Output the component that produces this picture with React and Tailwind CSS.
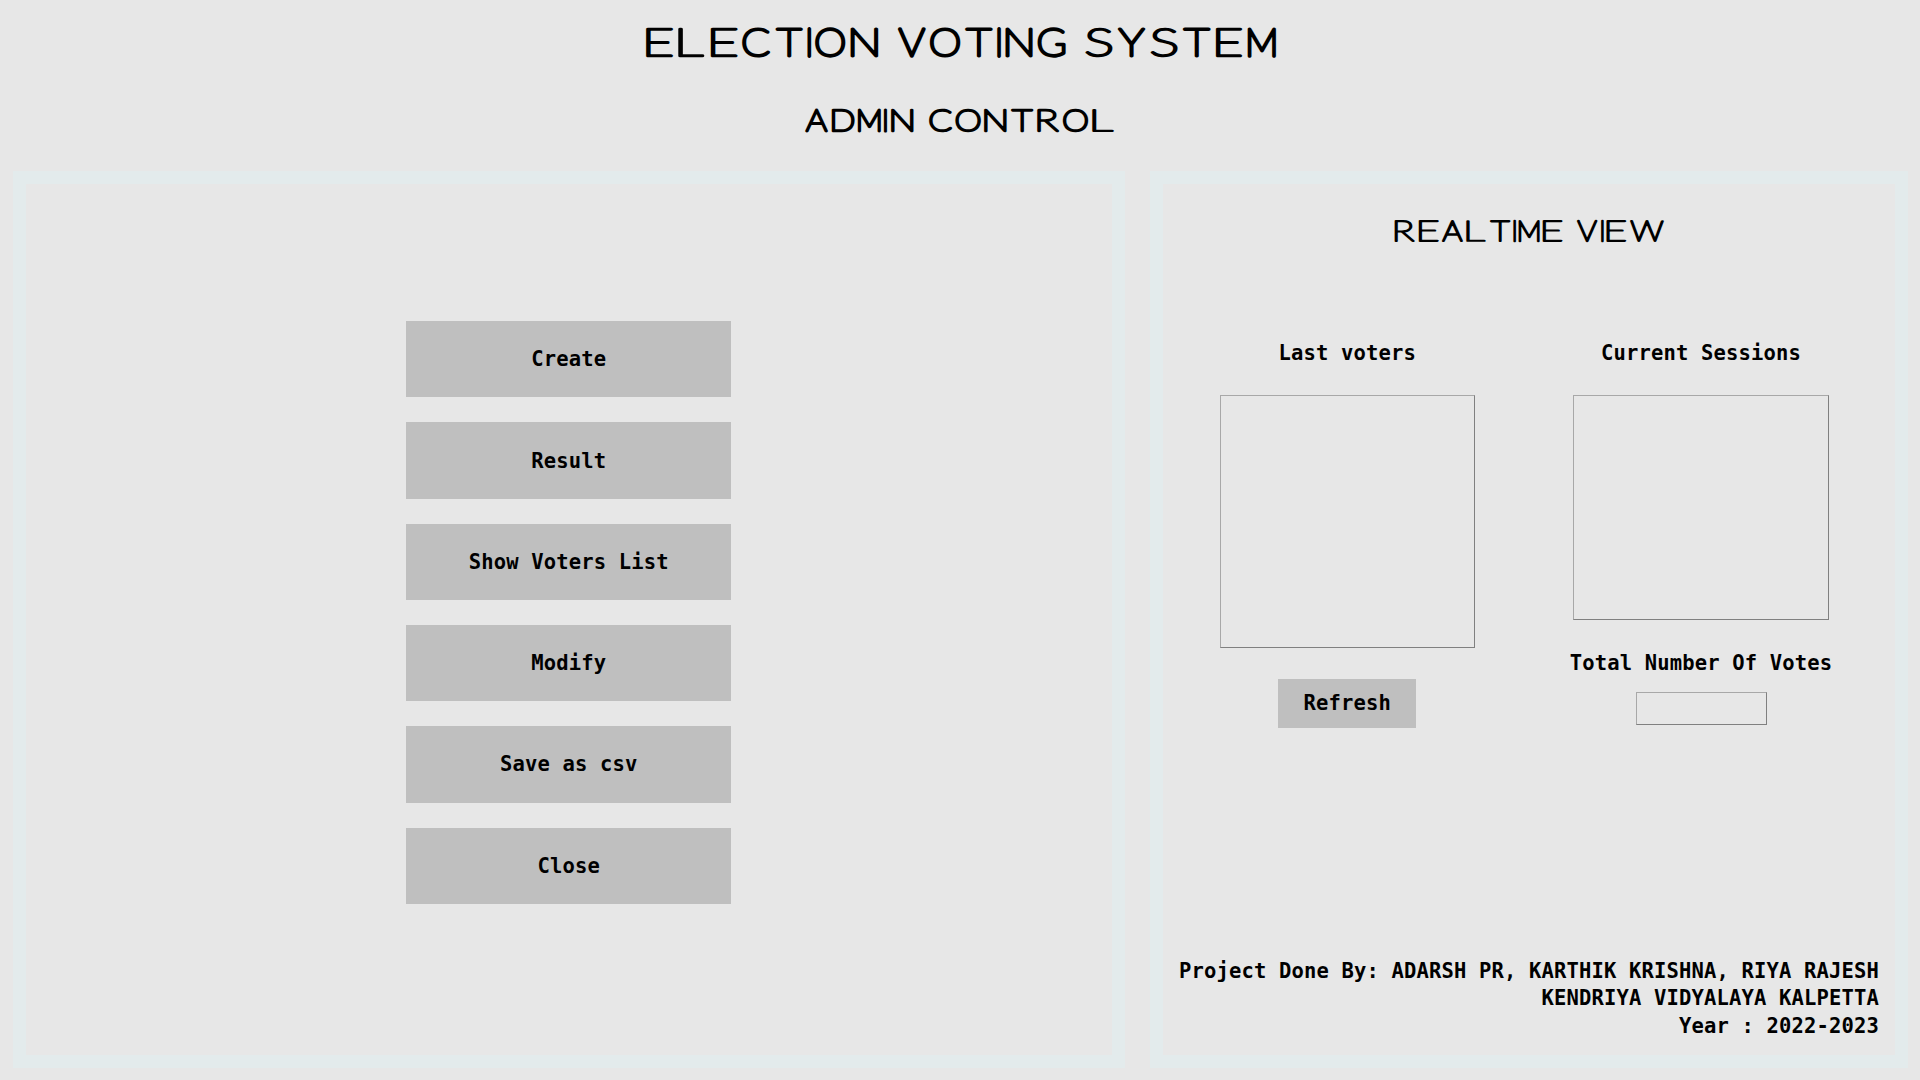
import React from "react";

const actions = ["Create", "Result", "Show Voters List", "Modify", "Save as csv", "Close"];

const pen = document.createElement("canvas").getContext("2d");

// Position, advance and pen width that stretch a letter to the given left and right edges.
function fitLetter(letter, size, stroke, left, right) {
  pen.font = `100 ${size * 10}px Lato, sans-serif`;
  const m = pen.measureText(letter);
  const lsb = -m.actualBoundingBoxLeft / 10;
  const ink = (m.actualBoundingBoxRight + m.actualBoundingBoxLeft) / 10;
  const scale = letter === "I" ? 0.85 : (right - left) / (ink + stroke);
  const start = (left + right) / 2 - (ink * scale) / 2;
  return { x: start - lsb * scale, length: (m.width / 10) * scale, line: stroke / Math.pow(scale, 0.7) };
}

// Wide display lettering; every letter has its own left and right edge.
function Display({ width, height, size, baseline, stroke, text, edges }) {
  return (
    <svg width={width} height={height} className="block overflow-visible" fill="#000">
      <text
        y={baseline}
        fontSize={size}
        fontWeight="100"
        letterSpacing="0"
        fontFamily="Lato, sans-serif"
        stroke="#000"
        strokeLinejoin="round"
        xmlSpace="preserve"
      >
        {[...text].map((letter, i) => {
          if (letter === " ") return " ";
          const { x, length, line } = fitLetter(letter, size, stroke, edges[i][0], edges[i][1]);
          return (
            <tspan key={i} x={x} textLength={length} lengthAdjust="spacingAndGlyphs" strokeWidth={line}>
              {letter}
            </tspan>
          );
        })}
      </text>
    </svg>
  );
}

const titleEdges = [
  [0.2, 28.8], [32.1, 60.8], [65, 93.4], [96.9, 125.9], [129.8, 158.2], [162.5, 166], [169.7, 200.4], [205, 233.7], null,
  [252.5, 281], [284.5, 315.4], [319.4, 348.2], [352.4, 355.8], [360, 388.2], [392.4, 421], null,
  [439.5, 468.2], [472.6, 501], [504.8, 533.4], [537, 566], [570, 597.8], [602.4, 631],
];
const adminEdges = [
  [0, 23.3], [26.5, 50.2], [52.7, 76], [78.9, 82], [85.5, 108.9], null,
  [123.8, 147.8], [150, 176], [178.5, 202], [205.3, 228.7], [231.7, 255], [257.6, 283.4], [286.2, 310],
];
const viewEdges = [
  [0, 21.4], [24, 45.3], [47.6, 69.2], [71.4, 92.7], [95.3, 116.7], [119, 122.4], [124.3, 145.7], [148, 169], null,
  [182.7, 203.7], [206.7, 210], [211.7, 232.7], [235.3, 270.4],
];

function Label({ children, className = "" }) {
  return <p className={"whitespace-pre leading-[27.5px] " + className}>{children}</p>;
}

const box = "border border-t-[#a8a8a8] border-l-[#a8a8a8] border-r-[#808080] border-b-[#808080]";

export default function App() {
  return (
    <div className="flex h-[1080px] w-[1920px] flex-col overflow-hidden bg-[#e7e7e7] font-['DejaVu_Sans_Mono',monospace] text-[20.5px] font-bold tracking-[0.16px] text-black">
      <header className="flex h-[171px] shrink-0 flex-col items-center pt-[26px]">
        <h1>
          <Display width={631} height={32} size={38.8} baseline={29.6} stroke={3.4} text="ELECTION VOTING SYSTEM" edges={titleEdges} />
        </h1>
        <h2 className="mt-[50px]">
          <Display width={310} height={26} size={30.8} baseline={23.4} stroke={2.9} text="ADMIN CONTROL" edges={adminEdges} />
        </h2>
      </header>

      <main className="flex h-[897px] pl-[12.5px]">
        <section className="flex w-[1112.5px] flex-col items-center gap-[25px] border-[13px] border-[#e3ebec] pt-[137.2px]">
          {actions.map((label) => (
            <button key={label} className="h-[76.3px] w-[325px] shrink-0 bg-[#bfbfbf] pt-[0.5px]">
              {label}
            </button>
          ))}
        </section>

        <section className="ml-[25px] flex w-[757.5px] flex-col border-[13px] border-[#e3ebec]">
          <h3 className="flex justify-center pt-[36px]">
            <Display width={270} height={23} size={28} baseline={21.3} stroke={2.4} text="REALTIME VIEW" edges={viewEdges} />
          </h3>
          <div className="flex pt-[97px]">
            <div className="flex w-[368.5px] flex-col items-center">
              <Label>Last voters</Label>
              <div className={"mt-[27.5px] h-[253px] w-[255px] " + box} />
              <button className="mt-[30.5px] h-[49px] w-[138px] bg-[#bfbfbf]">Refresh</button>
            </div>
            <div className="flex w-[339px] flex-col items-center">
              <Label>Current Sessions</Label>
              <div className={"mt-[27.5px] h-[225px] w-[256px] " + box} />
              <Label className="mt-[30px]">Total Number Of Votes</Label>
              <div className={"mt-[14px] h-[33px] w-[131px] " + box} />
            </div>
          </div>
          <footer className="mt-auto pb-[15px] pr-[15.5px] text-right">
            <Label>Project Done By: ADARSH PR, KARTHIK KRISHNA, RIYA RAJESH</Label>
            <Label>KENDRIYA VIDYALAYA KALPETTA</Label>
            <Label>Year : 2022-2023</Label>
          </footer>
        </section>
      </main>
    </div>
  );
}
